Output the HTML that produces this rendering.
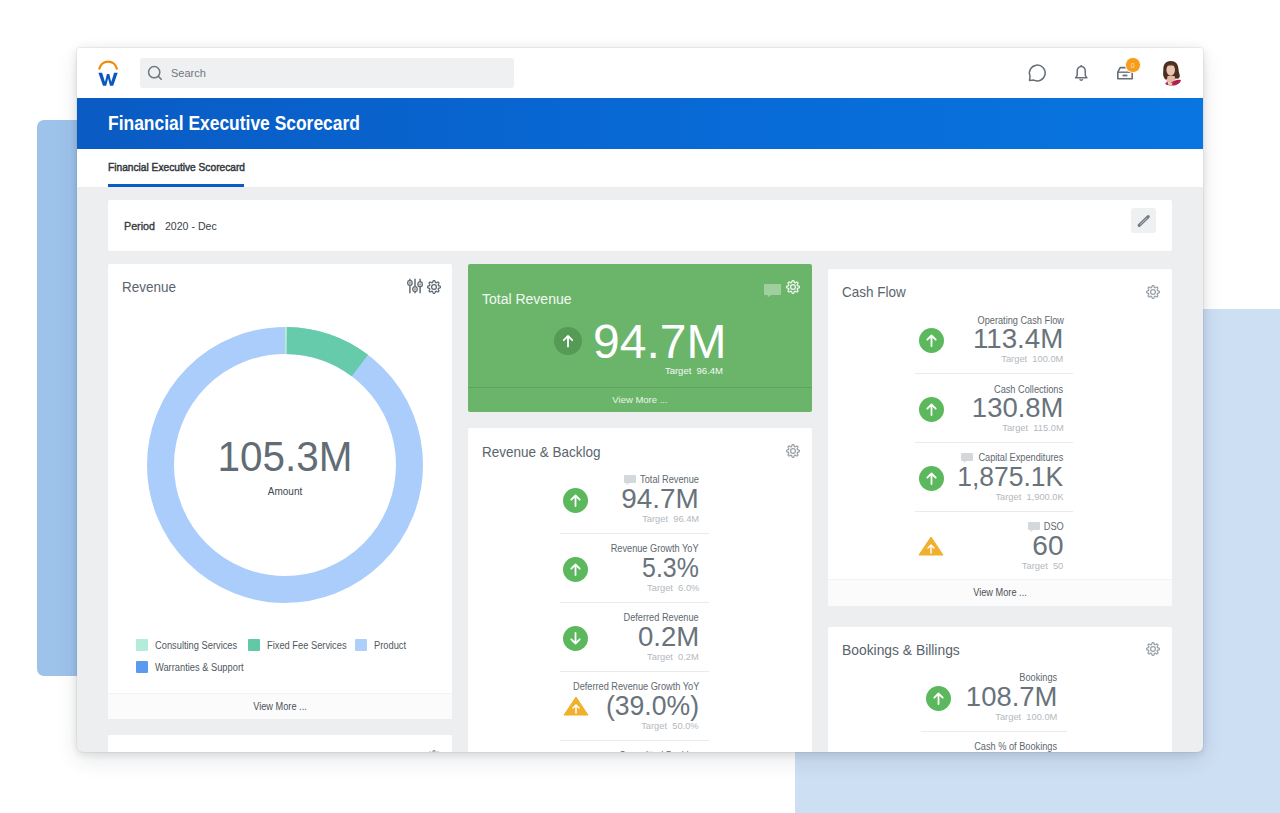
<!DOCTYPE html>
<html><head><meta charset="utf-8">
<style>
*{margin:0;padding:0;box-sizing:border-box}
html,body{width:1280px;height:813px;overflow:hidden;background:#fff;font-family:"Liberation Sans",sans-serif;position:relative}
.a{position:absolute}
.bgl{left:37px;top:120px;width:80px;height:556px;background:#9ec3eb;border-radius:7px}
.bgr{left:795px;top:309px;width:485px;height:504px;background:#cddff3}
.win{left:77px;top:48px;width:1126px;height:704px;background:#eceef0;border-radius:3px 3px 6px 6px;box-shadow:0 0 0 1px rgba(0,0,0,.045),0 3px 7px rgba(40,50,60,.07),0 8px 22px rgba(40,50,60,.11),0 0 12px rgba(0,0,0,.05);overflow:hidden}
.clip{left:0;top:0;width:1280px;height:752px;overflow:hidden}
.topbar{left:77px;top:48px;width:1126px;height:50px;background:#fff;border-radius:3px 3px 0 0}
.hdr{left:77px;top:98px;width:1126px;height:51px;background:linear-gradient(90deg,#0a5bc3 0%,#0867d3 45%,#0875e0 100%)}
.tabs{left:77px;top:149px;width:1126px;height:38px;background:#fff}
.card{background:#fff;border-radius:2px}
.t{white-space:nowrap;line-height:1}
.ttl{font-size:14.5px;color:#5a646d;transform:scaleX(.93);transform-origin:left}
.lbl{font-size:10px;color:#60686f;text-align:right;transform-origin:right}
.val{font-size:28px;color:#69737b;text-align:right;transform-origin:right}
.tgt{font-size:9.5px;color:#b3b9be;text-align:right;transform-origin:right}
.div{height:1px;background:#e9ebed}
.foot{background:#fbfbfb;border-top:1px solid #f3f3f4}
.vm{font-size:10px;color:#4b5157;transform:translateX(-50%) scaleX(.92)}
</style></head><body>
<div class="a bgl"></div><div class="a bgr"></div><div class="a win"></div><div class="a clip"><div class="a topbar"></div><div class="a hdr"></div><div class="a tabs"></div><svg class="a" style="left:94px;top:56px" width="28" height="34" viewBox="0 0 28 34">
<path d="M5.4 12.6 A8.9 8.9 0 0 1 22.8 12.6" fill="none" stroke="#f38a00" stroke-width="2.3" stroke-linecap="round"/>
<path d="M4.4 16.7 L8.1 16.7 L11 26 L12.9 18.1 L15.3 18.1 L17.2 26 L20.1 16.7 L23.7 16.7 L19.2 29.7 L16 29.7 L14.1 22.6 L12.2 29.7 L9 29.7 Z" fill="#0a57c0"/>
</svg><div class="a" style="left:140px;top:58px;width:374px;height:30px;background:#eff0f2;border-radius:3px"></div><svg class="a" style="left:146px;top:64px" width="18" height="18" viewBox="0 0 18 18">
<circle cx="8.2" cy="8.2" r="5.6" fill="none" stroke="#6f7780" stroke-width="1.5"/>
<path d="M12.3 12.3 L15.2 15.2" stroke="#6f7780" stroke-width="1.6" stroke-linecap="round"/></svg><div class="a t " style="left:171px;top:68px;font-size:11px;color:#6f7780">Search</div><svg class="a" style="left:1026px;top:62px" width="24" height="22" viewBox="0 0 24 22">
<path d="M4.1 14.2 L3.5 18.4 L7.9 18.1 A7.9 7.9 0 1 0 4.1 14.2 Z" fill="none" stroke="#666f78" stroke-width="1.5" stroke-linejoin="round"/></svg><svg class="a" style="left:1072px;top:63px" width="18" height="20" viewBox="0 0 18 20">
<path d="M9.25 3.6 C6.4 3.6 5.2 5.8 5.2 8.4 L5.2 12.4 L3.6 14.8 L14.9 14.8 L13.3 12.4 L13.3 8.4 C13.3 5.8 12.1 3.6 9.25 3.6 Z" fill="none" stroke="#666f78" stroke-width="1.5" stroke-linejoin="round"/>
<path d="M7.8 16.1 A1.5 1.5 0 0 0 10.7 16.1" fill="none" stroke="#666f78" stroke-width="1.5"/>
<circle cx="9.25" cy="3" r="1" fill="#666f78"/></svg><svg class="a" style="left:1114px;top:62px" width="22" height="20" viewBox="0 0 22 20">
<path d="M3.8 16.8 L3.8 10.2 L6.2 5.6 L15.8 5.6 L18.2 10.2 L18.2 16.8 Z" fill="none" stroke="#666f78" stroke-width="1.6" stroke-linejoin="round"/>
<path d="M3.8 10.2 L18.2 10.2" stroke="#666f78" stroke-width="1.4"/>
<path d="M8.6 13.5 L13.4 13.5" stroke="#666f78" stroke-width="1.8"/></svg><div class="a" style="left:1125px;top:57.4px;width:15.5px;height:15.5px;border-radius:50%;background:#f89c1c;border:1.2px solid #fff"></div><div class="a t " style="left:1130.8px;top:61.5px;font-size:7px;color:#fde2b8">0</div><svg class="a" style="left:1158px;top:56px" width="28" height="34" viewBox="0 0 28 34">
<path d="M12.5 5 C7.5 5 5.2 9 5.3 13.5 C5.3 17 4.6 19 6 21.5 C6.8 23 7.6 23.8 8.2 23.6 L20.6 22.6 C22 21.5 22.2 19.6 21.3 17.6 C20.6 15.5 20.6 12.5 19.9 10 C19 6.8 16.3 5 12.5 5 Z" fill="#4b2e20"/>
<path d="M9.6 20 L16.6 20 L18 26 L8.4 26 Z" fill="#e2bba6"/>
<ellipse cx="12.7" cy="13.9" rx="4.3" ry="5.9" fill="#e9c4b0"/>
<path d="M8.3 10.2 C9.2 8 11 7.5 13 7.5 C15.5 7.6 17 9 17.2 11 C16.3 9.6 14.5 9.3 12.5 9.4 C10.6 9.5 9.2 9.8 8.3 10.2 Z" fill="#5a3826"/>
<path d="M7.2 27.8 C7.8 26.6 8.6 26 9.6 25.8 L10.4 28.8 C9.2 29.2 8 28.9 7.2 27.8 Z" fill="#b5285a"/>
<path d="M9.8 28.9 C11 26.5 14 26 16.2 24.9 C18.2 24 21 23.3 23 24 C22.6 26.3 20.6 28.4 17.6 29.2 C14.6 29.8 11.8 29.6 9.8 28.9 Z" fill="#b2204f"/>
<path d="M10.2 25.5 C11.5 26.6 13.2 27 14.6 26.4 L13.8 29.4 C12.4 29.5 11.2 29.3 10.4 29 Z" fill="#e6c6b4"/>
</svg><div class="a t " style="left:108px;top:114px;font-size:19.5px;font-weight:bold;color:#fff;transform:scaleX(.894);transform-origin:left">Financial Executive Scorecard</div><div class="a t " style="left:108px;top:162px;font-size:10.5px;color:#33383d;-webkit-text-stroke:.45px #33383d;transform:scaleX(.97);transform-origin:left">Financial Executive Scorecard</div><div class="a" style="left:108px;top:184px;width:136px;height:3px;background:#0b5cc4"></div><div class="a card" style="left:108px;top:200px;width:1064px;height:51px"></div><div class="a t " style="left:124px;top:221px;font-size:10.5px;color:#363b40;-webkit-text-stroke:.35px #363b40;transform:scaleX(1.02);transform-origin:left">Period</div><div class="a t " style="left:165px;top:221px;font-size:11px;color:#3b4045;transform:scaleX(.96);transform-origin:left">2020 - Dec</div><div class="a" style="left:1131px;top:208px;width:25px;height:25px;background:#eef0f2;border-radius:3px"></div><svg class="a" style="left:1131px;top:208px" width="25" height="25" viewBox="0 0 25 25"><path d="M8.2 17.4 L17.2 8.6" stroke="#737b83" stroke-width="3.2" stroke-linecap="round"/><path d="M9.4 16.2 L15.6 10.2" stroke="#c9cdd1" stroke-width=".9" stroke-linecap="round"/></svg><div class="a card" style="left:108px;top:264px;width:344px;height:455px"></div><div class="a t ttl" style="left:122px;top:280px;">Revenue</div><svg class="a" style="left:407px;top:278px" width="16" height="16" viewBox="0 0 16 16"><g stroke="#5a626a" stroke-width="1.4" fill="none"><path d="M2.9 0.8 V2.6 M2.9 7.2 V15.2 M8 0.8 V9 M8 13.4 V15.2 M13.1 0.8 V4 M13.1 8.6 V15.2"/></g><g stroke="#5a626a" stroke-width="1.3" fill="#fff"><rect x="0.75" y="2.6" width="4.3" height="4.6" rx="1.6"/><rect x="5.85" y="8.8" width="4.3" height="4.6" rx="1.6"/><rect x="10.95" y="3.9" width="4.3" height="4.6" rx="1.6"/></g><g fill="#5a626a"><circle cx="2.9" cy="4.9" r=".8"/><circle cx="8" cy="11.1" r=".8"/><circle cx="13.1" cy="6.2" r=".8"/></g></svg><svg class="a" style="left:425.5px;top:278.5px" width="16" height="16" viewBox="0 0 16 16"><path d="M8.00 1.55 L8.25 1.57 L8.50 1.63 L8.74 1.78 L8.94 2.08 L9.08 2.56 L9.19 3.04 L9.31 3.35 L9.46 3.52 L9.61 3.63 L9.78 3.70 L9.95 3.77 L10.14 3.80 L10.36 3.78 L10.67 3.65 L11.08 3.39 L11.52 3.15 L11.88 3.08 L12.15 3.14 L12.37 3.27 L12.56 3.44 L12.73 3.63 L12.86 3.85 L12.92 4.12 L12.85 4.48 L12.61 4.92 L12.35 5.33 L12.22 5.64 L12.20 5.86 L12.23 6.05 L12.30 6.22 L12.37 6.39 L12.48 6.54 L12.65 6.69 L12.96 6.81 L13.44 6.92 L13.92 7.06 L14.22 7.26 L14.37 7.50 L14.43 7.75 L14.45 8.00 L14.43 8.25 L14.37 8.50 L14.22 8.74 L13.92 8.94 L13.44 9.08 L12.96 9.19 L12.65 9.31 L12.48 9.46 L12.37 9.61 L12.30 9.78 L12.23 9.95 L12.20 10.14 L12.22 10.36 L12.35 10.67 L12.61 11.08 L12.85 11.52 L12.92 11.88 L12.86 12.15 L12.73 12.37 L12.56 12.56 L12.37 12.73 L12.15 12.86 L11.88 12.92 L11.52 12.85 L11.08 12.61 L10.67 12.35 L10.36 12.22 L10.14 12.20 L9.95 12.23 L9.78 12.30 L9.61 12.37 L9.46 12.48 L9.31 12.65 L9.19 12.96 L9.08 13.44 L8.94 13.92 L8.74 14.22 L8.50 14.37 L8.25 14.43 L8.00 14.45 L7.75 14.43 L7.50 14.37 L7.26 14.22 L7.06 13.92 L6.92 13.44 L6.81 12.96 L6.69 12.65 L6.54 12.48 L6.39 12.37 L6.22 12.30 L6.05 12.23 L5.86 12.20 L5.64 12.22 L5.33 12.35 L4.92 12.61 L4.48 12.85 L4.12 12.92 L3.85 12.86 L3.63 12.73 L3.44 12.56 L3.27 12.37 L3.14 12.15 L3.08 11.88 L3.15 11.52 L3.39 11.08 L3.65 10.67 L3.78 10.36 L3.80 10.14 L3.77 9.95 L3.70 9.78 L3.63 9.61 L3.52 9.46 L3.35 9.31 L3.04 9.19 L2.56 9.08 L2.08 8.94 L1.78 8.74 L1.63 8.50 L1.57 8.25 L1.55 8.00 L1.57 7.75 L1.63 7.50 L1.78 7.26 L2.08 7.06 L2.56 6.92 L3.04 6.81 L3.35 6.69 L3.52 6.54 L3.63 6.39 L3.70 6.22 L3.77 6.05 L3.80 5.86 L3.78 5.64 L3.65 5.33 L3.39 4.92 L3.15 4.48 L3.08 4.12 L3.14 3.85 L3.27 3.63 L3.44 3.44 L3.63 3.27 L3.85 3.14 L4.12 3.08 L4.48 3.15 L4.92 3.39 L5.33 3.65 L5.64 3.78 L5.86 3.80 L6.05 3.77 L6.22 3.70 L6.39 3.63 L6.54 3.52 L6.69 3.35 L6.81 3.04 L6.92 2.56 L7.06 2.08 L7.26 1.78 L7.50 1.63 L7.75 1.57 Z" fill="none" stroke="#5f6870" stroke-width="1.25" stroke-linejoin="round"/><circle cx="8" cy="8" r="2.4" fill="none" stroke="#5f6870" stroke-width="1.25"/></svg><svg class="a" style="left:0;top:0" width="1280" height="813"><circle cx="285" cy="465" r="124.5" fill="none" stroke="#abcdfb" stroke-width="27"/><path d="M286.30 340.51 A124.5 124.5 0 0 1 359.93 365.57" fill="none" stroke="#66cbab" stroke-width="27"/><path d="M285.00 340.50 A124.5 124.5 0 0 1 286.74 340.51" fill="none" stroke="#b7ecd8" stroke-width="27"/></svg><div class="a t " style="left:285px;top:435px;font-size:43px;color:#626c75;transform:translateX(-50%) scaleX(.94)">105.3M</div><div class="a t " style="left:285px;top:487px;font-size:10px;color:#43494f;transform:translateX(-50%)">Amount</div><div class="a" style="left:136px;top:639px;width:12px;height:12px;background:#b4ecdb;border-radius:1px"></div><div class="a t " style="left:154.5px;top:640.5px;font-size:10px;color:#50575e;transform:scaleX(.93);transform-origin:left">Consulting Services</div><div class="a" style="left:248px;top:639px;width:12px;height:12px;background:#62c9a6;border-radius:1px"></div><div class="a t " style="left:266.5px;top:640.5px;font-size:10px;color:#50575e;transform:scaleX(.93);transform-origin:left">Fixed Fee Services</div><div class="a" style="left:355px;top:639px;width:12px;height:12px;background:#acd0fb;border-radius:1px"></div><div class="a t " style="left:373.5px;top:640.5px;font-size:10px;color:#50575e;transform:scaleX(.93);transform-origin:left">Product</div><div class="a" style="left:136px;top:661px;width:12px;height:12px;background:#5a9bf0;border-radius:1px"></div><div class="a t " style="left:154.5px;top:662.5px;font-size:10px;color:#50575e;transform:scaleX(.93);transform-origin:left">Warranties &amp; Support</div><div class="a foot" style="left:108px;top:693px;width:344px;height:26px"></div><div class="a t vm" style="left:280px;top:702px;">View More ...</div><div class="a card" style="left:108px;top:735px;width:344px;height:40px"></div><svg class="a" style="left:425.5px;top:749px" width="16" height="16" viewBox="0 0 16 16"><path d="M8.00 1.55 L8.25 1.57 L8.50 1.63 L8.74 1.78 L8.94 2.08 L9.08 2.56 L9.19 3.04 L9.31 3.35 L9.46 3.52 L9.61 3.63 L9.78 3.70 L9.95 3.77 L10.14 3.80 L10.36 3.78 L10.67 3.65 L11.08 3.39 L11.52 3.15 L11.88 3.08 L12.15 3.14 L12.37 3.27 L12.56 3.44 L12.73 3.63 L12.86 3.85 L12.92 4.12 L12.85 4.48 L12.61 4.92 L12.35 5.33 L12.22 5.64 L12.20 5.86 L12.23 6.05 L12.30 6.22 L12.37 6.39 L12.48 6.54 L12.65 6.69 L12.96 6.81 L13.44 6.92 L13.92 7.06 L14.22 7.26 L14.37 7.50 L14.43 7.75 L14.45 8.00 L14.43 8.25 L14.37 8.50 L14.22 8.74 L13.92 8.94 L13.44 9.08 L12.96 9.19 L12.65 9.31 L12.48 9.46 L12.37 9.61 L12.30 9.78 L12.23 9.95 L12.20 10.14 L12.22 10.36 L12.35 10.67 L12.61 11.08 L12.85 11.52 L12.92 11.88 L12.86 12.15 L12.73 12.37 L12.56 12.56 L12.37 12.73 L12.15 12.86 L11.88 12.92 L11.52 12.85 L11.08 12.61 L10.67 12.35 L10.36 12.22 L10.14 12.20 L9.95 12.23 L9.78 12.30 L9.61 12.37 L9.46 12.48 L9.31 12.65 L9.19 12.96 L9.08 13.44 L8.94 13.92 L8.74 14.22 L8.50 14.37 L8.25 14.43 L8.00 14.45 L7.75 14.43 L7.50 14.37 L7.26 14.22 L7.06 13.92 L6.92 13.44 L6.81 12.96 L6.69 12.65 L6.54 12.48 L6.39 12.37 L6.22 12.30 L6.05 12.23 L5.86 12.20 L5.64 12.22 L5.33 12.35 L4.92 12.61 L4.48 12.85 L4.12 12.92 L3.85 12.86 L3.63 12.73 L3.44 12.56 L3.27 12.37 L3.14 12.15 L3.08 11.88 L3.15 11.52 L3.39 11.08 L3.65 10.67 L3.78 10.36 L3.80 10.14 L3.77 9.95 L3.70 9.78 L3.63 9.61 L3.52 9.46 L3.35 9.31 L3.04 9.19 L2.56 9.08 L2.08 8.94 L1.78 8.74 L1.63 8.50 L1.57 8.25 L1.55 8.00 L1.57 7.75 L1.63 7.50 L1.78 7.26 L2.08 7.06 L2.56 6.92 L3.04 6.81 L3.35 6.69 L3.52 6.54 L3.63 6.39 L3.70 6.22 L3.77 6.05 L3.80 5.86 L3.78 5.64 L3.65 5.33 L3.39 4.92 L3.15 4.48 L3.08 4.12 L3.14 3.85 L3.27 3.63 L3.44 3.44 L3.63 3.27 L3.85 3.14 L4.12 3.08 L4.48 3.15 L4.92 3.39 L5.33 3.65 L5.64 3.78 L5.86 3.80 L6.05 3.77 L6.22 3.70 L6.39 3.63 L6.54 3.52 L6.69 3.35 L6.81 3.04 L6.92 2.56 L7.06 2.08 L7.26 1.78 L7.50 1.63 L7.75 1.57 Z" fill="none" stroke="#9aa1a8" stroke-width="1.25" stroke-linejoin="round"/><circle cx="8" cy="8" r="2.4" fill="none" stroke="#9aa1a8" stroke-width="1.25"/></svg><div class="a" style="left:468px;top:264px;width:344px;height:148px;background:#6bb56b;border-radius:2px"></div><div class="a t " style="left:482px;top:292px;font-size:14px;color:#f3f9f3">Total Revenue</div><svg class="a" style="left:764px;top:284px" width="17" height="14" viewBox="0 0 17 14"><path d="M1 0 H16 Q17 0 17 1 V10 Q17 11 16 11 L7.14 11 L3.74 13.2 L3.74 11 H1 Q0 11 0 10 V1 Q0 0 1 0 Z" fill="#9fcf9f"/></svg><svg class="a" style="left:785px;top:279px" width="16" height="16" viewBox="0 0 16 16"><path d="M8.00 1.55 L8.25 1.57 L8.50 1.63 L8.74 1.78 L8.94 2.08 L9.08 2.56 L9.19 3.04 L9.31 3.35 L9.46 3.52 L9.61 3.63 L9.78 3.70 L9.95 3.77 L10.14 3.80 L10.36 3.78 L10.67 3.65 L11.08 3.39 L11.52 3.15 L11.88 3.08 L12.15 3.14 L12.37 3.27 L12.56 3.44 L12.73 3.63 L12.86 3.85 L12.92 4.12 L12.85 4.48 L12.61 4.92 L12.35 5.33 L12.22 5.64 L12.20 5.86 L12.23 6.05 L12.30 6.22 L12.37 6.39 L12.48 6.54 L12.65 6.69 L12.96 6.81 L13.44 6.92 L13.92 7.06 L14.22 7.26 L14.37 7.50 L14.43 7.75 L14.45 8.00 L14.43 8.25 L14.37 8.50 L14.22 8.74 L13.92 8.94 L13.44 9.08 L12.96 9.19 L12.65 9.31 L12.48 9.46 L12.37 9.61 L12.30 9.78 L12.23 9.95 L12.20 10.14 L12.22 10.36 L12.35 10.67 L12.61 11.08 L12.85 11.52 L12.92 11.88 L12.86 12.15 L12.73 12.37 L12.56 12.56 L12.37 12.73 L12.15 12.86 L11.88 12.92 L11.52 12.85 L11.08 12.61 L10.67 12.35 L10.36 12.22 L10.14 12.20 L9.95 12.23 L9.78 12.30 L9.61 12.37 L9.46 12.48 L9.31 12.65 L9.19 12.96 L9.08 13.44 L8.94 13.92 L8.74 14.22 L8.50 14.37 L8.25 14.43 L8.00 14.45 L7.75 14.43 L7.50 14.37 L7.26 14.22 L7.06 13.92 L6.92 13.44 L6.81 12.96 L6.69 12.65 L6.54 12.48 L6.39 12.37 L6.22 12.30 L6.05 12.23 L5.86 12.20 L5.64 12.22 L5.33 12.35 L4.92 12.61 L4.48 12.85 L4.12 12.92 L3.85 12.86 L3.63 12.73 L3.44 12.56 L3.27 12.37 L3.14 12.15 L3.08 11.88 L3.15 11.52 L3.39 11.08 L3.65 10.67 L3.78 10.36 L3.80 10.14 L3.77 9.95 L3.70 9.78 L3.63 9.61 L3.52 9.46 L3.35 9.31 L3.04 9.19 L2.56 9.08 L2.08 8.94 L1.78 8.74 L1.63 8.50 L1.57 8.25 L1.55 8.00 L1.57 7.75 L1.63 7.50 L1.78 7.26 L2.08 7.06 L2.56 6.92 L3.04 6.81 L3.35 6.69 L3.52 6.54 L3.63 6.39 L3.70 6.22 L3.77 6.05 L3.80 5.86 L3.78 5.64 L3.65 5.33 L3.39 4.92 L3.15 4.48 L3.08 4.12 L3.14 3.85 L3.27 3.63 L3.44 3.44 L3.63 3.27 L3.85 3.14 L4.12 3.08 L4.48 3.15 L4.92 3.39 L5.33 3.65 L5.64 3.78 L5.86 3.80 L6.05 3.77 L6.22 3.70 L6.39 3.63 L6.54 3.52 L6.69 3.35 L6.81 3.04 L6.92 2.56 L7.06 2.08 L7.26 1.78 L7.50 1.63 L7.75 1.57 Z" fill="none" stroke="#f0f7f0" stroke-width="1.25" stroke-linejoin="round"/><circle cx="8" cy="8" r="2.4" fill="none" stroke="#f0f7f0" stroke-width="1.25"/></svg><svg class="a" style="left:554px;top:327px" width="28" height="28" viewBox="0 0 28 28"><circle cx="14" cy="14" r="14" fill="#559a55"/><path d="M14 19.5 L14 9 M9.8 13.2 L14 9 L18.2 13.2" fill="none" stroke="#fff" stroke-width="1.8" stroke-linecap="round" stroke-linejoin="round"/></svg><div class="a t " style="right:553.5px;top:317.5px;font-size:48px;color:#fff">94.7M</div><div class="a t " style="right:557px;top:366px;font-size:9.5px;color:#f3f9f3">Target &nbsp;96.4M</div><div class="a" style="left:468px;top:387px;width:344px;height:1px;background:#5fa35f"></div><div class="a t " style="left:640px;top:395px;font-size:9.5px;color:#eaf4ea;transform:translateX(-50%)">View More ...</div><div class="a card" style="left:468px;top:428px;width:344px;height:340px"></div><div class="a t ttl" style="left:482px;top:445px;">Revenue &amp; Backlog</div><svg class="a" style="left:785px;top:443px" width="16" height="16" viewBox="0 0 16 16"><path d="M8.00 1.55 L8.25 1.57 L8.50 1.63 L8.74 1.78 L8.94 2.08 L9.08 2.56 L9.19 3.04 L9.31 3.35 L9.46 3.52 L9.61 3.63 L9.78 3.70 L9.95 3.77 L10.14 3.80 L10.36 3.78 L10.67 3.65 L11.08 3.39 L11.52 3.15 L11.88 3.08 L12.15 3.14 L12.37 3.27 L12.56 3.44 L12.73 3.63 L12.86 3.85 L12.92 4.12 L12.85 4.48 L12.61 4.92 L12.35 5.33 L12.22 5.64 L12.20 5.86 L12.23 6.05 L12.30 6.22 L12.37 6.39 L12.48 6.54 L12.65 6.69 L12.96 6.81 L13.44 6.92 L13.92 7.06 L14.22 7.26 L14.37 7.50 L14.43 7.75 L14.45 8.00 L14.43 8.25 L14.37 8.50 L14.22 8.74 L13.92 8.94 L13.44 9.08 L12.96 9.19 L12.65 9.31 L12.48 9.46 L12.37 9.61 L12.30 9.78 L12.23 9.95 L12.20 10.14 L12.22 10.36 L12.35 10.67 L12.61 11.08 L12.85 11.52 L12.92 11.88 L12.86 12.15 L12.73 12.37 L12.56 12.56 L12.37 12.73 L12.15 12.86 L11.88 12.92 L11.52 12.85 L11.08 12.61 L10.67 12.35 L10.36 12.22 L10.14 12.20 L9.95 12.23 L9.78 12.30 L9.61 12.37 L9.46 12.48 L9.31 12.65 L9.19 12.96 L9.08 13.44 L8.94 13.92 L8.74 14.22 L8.50 14.37 L8.25 14.43 L8.00 14.45 L7.75 14.43 L7.50 14.37 L7.26 14.22 L7.06 13.92 L6.92 13.44 L6.81 12.96 L6.69 12.65 L6.54 12.48 L6.39 12.37 L6.22 12.30 L6.05 12.23 L5.86 12.20 L5.64 12.22 L5.33 12.35 L4.92 12.61 L4.48 12.85 L4.12 12.92 L3.85 12.86 L3.63 12.73 L3.44 12.56 L3.27 12.37 L3.14 12.15 L3.08 11.88 L3.15 11.52 L3.39 11.08 L3.65 10.67 L3.78 10.36 L3.80 10.14 L3.77 9.95 L3.70 9.78 L3.63 9.61 L3.52 9.46 L3.35 9.31 L3.04 9.19 L2.56 9.08 L2.08 8.94 L1.78 8.74 L1.63 8.50 L1.57 8.25 L1.55 8.00 L1.57 7.75 L1.63 7.50 L1.78 7.26 L2.08 7.06 L2.56 6.92 L3.04 6.81 L3.35 6.69 L3.52 6.54 L3.63 6.39 L3.70 6.22 L3.77 6.05 L3.80 5.86 L3.78 5.64 L3.65 5.33 L3.39 4.92 L3.15 4.48 L3.08 4.12 L3.14 3.85 L3.27 3.63 L3.44 3.44 L3.63 3.27 L3.85 3.14 L4.12 3.08 L4.48 3.15 L4.92 3.39 L5.33 3.65 L5.64 3.78 L5.86 3.80 L6.05 3.77 L6.22 3.70 L6.39 3.63 L6.54 3.52 L6.69 3.35 L6.81 3.04 L6.92 2.56 L7.06 2.08 L7.26 1.78 L7.50 1.63 L7.75 1.57 Z" fill="none" stroke="#9aa1a8" stroke-width="1.25" stroke-linejoin="round"/><circle cx="8" cy="8" r="2.4" fill="none" stroke="#9aa1a8" stroke-width="1.25"/></svg><div class="a t lbl" style="right:581px;top:475px;transform:scaleX(0.92)">Total Revenue</div><svg class="a" style="left:623.5px;top:474.5px" width="12" height="11" viewBox="0 0 12 11"><path d="M1 0 H11 Q12 0 12 1 V7 Q12 8 11 8 L5.04 8 L2.64 10.2 L2.64 8 H1 Q0 8 0 7 V1 Q0 0 1 0 Z" fill="#d5d8db"/></svg><div class="a t val" style="right:581px;top:484.5px;transform:scaleX(0.996)">94.7M</div><div class="a t tgt" style="right:581px;top:513.5px;transform:scaleX(.98)">Target &nbsp;96.4M</div><svg class="a" style="left:563.0px;top:487.5px" width="25.0" height="25.0" viewBox="0 0 25.0 25.0"><circle cx="12.5" cy="12.5" r="12.5" fill="#5cb85c"/><path d="M12.5 18.0 L12.5 7.5 M8.3 11.7 L12.5 7.5 L16.7 11.7" fill="none" stroke="#fff" stroke-width="1.8" stroke-linecap="round" stroke-linejoin="round"/></svg><div class="a div" style="left:560px;top:532.6px;width:149px"></div><div class="a t lbl" style="right:581px;top:544px;transform:scaleX(0.92)">Revenue Growth YoY</div><div class="a t val" style="right:581px;top:553.5px;transform:scaleX(0.89)">5.3%</div><div class="a t tgt" style="right:581px;top:582.5px;transform:scaleX(.98)">Target &nbsp;6.0%</div><svg class="a" style="left:563.0px;top:556.5px" width="25.0" height="25.0" viewBox="0 0 25.0 25.0"><circle cx="12.5" cy="12.5" r="12.5" fill="#5cb85c"/><path d="M12.5 18.0 L12.5 7.5 M8.3 11.7 L12.5 7.5 L16.7 11.7" fill="none" stroke="#fff" stroke-width="1.8" stroke-linecap="round" stroke-linejoin="round"/></svg><div class="a div" style="left:560px;top:601.6px;width:149px"></div><div class="a t lbl" style="right:581px;top:613px;transform:scaleX(0.92)">Deferred Revenue</div><div class="a t val" style="right:581px;top:622.5px;transform:scaleX(0.985)">0.2M</div><div class="a t tgt" style="right:581px;top:651.5px;transform:scaleX(.98)">Target &nbsp;0.2M</div><svg class="a" style="left:563.0px;top:625.5px" width="25.0" height="25.0" viewBox="0 0 25.0 25.0"><circle cx="12.5" cy="12.5" r="12.5" fill="#5cb85c"/><path d="M12.5 7.0 L12.5 17.5 M8.3 13.3 L12.5 17.5 L16.7 13.3" fill="none" stroke="#fff" stroke-width="1.8" stroke-linecap="round" stroke-linejoin="round"/></svg><div class="a div" style="left:560px;top:670.6px;width:149px"></div><div class="a t lbl" style="right:581px;top:682px;transform:scaleX(0.92)">Deferred Revenue Growth YoY</div><div class="a t val" style="right:581px;top:691.5px;transform:scaleX(0.95)">(39.0%)</div><div class="a t tgt" style="right:581px;top:720.5px;transform:scaleX(.98)">Target &nbsp;50.0%</div><svg class="a" style="left:562.5px;top:695px" width="26" height="22" viewBox="0 0 26 22"><path d="M13 2 L25 20 L1 20 Z" fill="#f0b02b" stroke="#f0b02b" stroke-width="1" stroke-linejoin="round"/><path d="M13 18 L13 10 M10 13 L13 10 L16 13" fill="none" stroke="#fff" stroke-width="1.5" stroke-linecap="round" stroke-linejoin="round"/></svg><div class="a div" style="left:560px;top:739.6px;width:149px"></div><div class="a t lbl" style="right:581px;top:751px;transform:scaleX(0.92)">Committed Backlog</div><div class="a card" style="left:828px;top:269px;width:344px;height:337px"></div><div class="a t ttl" style="left:842px;top:285px;">Cash Flow</div><svg class="a" style="left:1145px;top:283.5px" width="16" height="16" viewBox="0 0 16 16"><path d="M8.00 1.55 L8.25 1.57 L8.50 1.63 L8.74 1.78 L8.94 2.08 L9.08 2.56 L9.19 3.04 L9.31 3.35 L9.46 3.52 L9.61 3.63 L9.78 3.70 L9.95 3.77 L10.14 3.80 L10.36 3.78 L10.67 3.65 L11.08 3.39 L11.52 3.15 L11.88 3.08 L12.15 3.14 L12.37 3.27 L12.56 3.44 L12.73 3.63 L12.86 3.85 L12.92 4.12 L12.85 4.48 L12.61 4.92 L12.35 5.33 L12.22 5.64 L12.20 5.86 L12.23 6.05 L12.30 6.22 L12.37 6.39 L12.48 6.54 L12.65 6.69 L12.96 6.81 L13.44 6.92 L13.92 7.06 L14.22 7.26 L14.37 7.50 L14.43 7.75 L14.45 8.00 L14.43 8.25 L14.37 8.50 L14.22 8.74 L13.92 8.94 L13.44 9.08 L12.96 9.19 L12.65 9.31 L12.48 9.46 L12.37 9.61 L12.30 9.78 L12.23 9.95 L12.20 10.14 L12.22 10.36 L12.35 10.67 L12.61 11.08 L12.85 11.52 L12.92 11.88 L12.86 12.15 L12.73 12.37 L12.56 12.56 L12.37 12.73 L12.15 12.86 L11.88 12.92 L11.52 12.85 L11.08 12.61 L10.67 12.35 L10.36 12.22 L10.14 12.20 L9.95 12.23 L9.78 12.30 L9.61 12.37 L9.46 12.48 L9.31 12.65 L9.19 12.96 L9.08 13.44 L8.94 13.92 L8.74 14.22 L8.50 14.37 L8.25 14.43 L8.00 14.45 L7.75 14.43 L7.50 14.37 L7.26 14.22 L7.06 13.92 L6.92 13.44 L6.81 12.96 L6.69 12.65 L6.54 12.48 L6.39 12.37 L6.22 12.30 L6.05 12.23 L5.86 12.20 L5.64 12.22 L5.33 12.35 L4.92 12.61 L4.48 12.85 L4.12 12.92 L3.85 12.86 L3.63 12.73 L3.44 12.56 L3.27 12.37 L3.14 12.15 L3.08 11.88 L3.15 11.52 L3.39 11.08 L3.65 10.67 L3.78 10.36 L3.80 10.14 L3.77 9.95 L3.70 9.78 L3.63 9.61 L3.52 9.46 L3.35 9.31 L3.04 9.19 L2.56 9.08 L2.08 8.94 L1.78 8.74 L1.63 8.50 L1.57 8.25 L1.55 8.00 L1.57 7.75 L1.63 7.50 L1.78 7.26 L2.08 7.06 L2.56 6.92 L3.04 6.81 L3.35 6.69 L3.52 6.54 L3.63 6.39 L3.70 6.22 L3.77 6.05 L3.80 5.86 L3.78 5.64 L3.65 5.33 L3.39 4.92 L3.15 4.48 L3.08 4.12 L3.14 3.85 L3.27 3.63 L3.44 3.44 L3.63 3.27 L3.85 3.14 L4.12 3.08 L4.48 3.15 L4.92 3.39 L5.33 3.65 L5.64 3.78 L5.86 3.80 L6.05 3.77 L6.22 3.70 L6.39 3.63 L6.54 3.52 L6.69 3.35 L6.81 3.04 L6.92 2.56 L7.06 2.08 L7.26 1.78 L7.50 1.63 L7.75 1.57 Z" fill="none" stroke="#9aa1a8" stroke-width="1.25" stroke-linejoin="round"/><circle cx="8" cy="8" r="2.4" fill="none" stroke="#9aa1a8" stroke-width="1.25"/></svg><div class="a t lbl" style="right:216.5px;top:315.5px;transform:scaleX(0.92)">Operating Cash Flow</div><div class="a t val" style="right:216.5px;top:325.0px;transform:scaleX(0.99)">113.4M</div><div class="a t tgt" style="right:216.5px;top:354.0px;transform:scaleX(.98)">Target &nbsp;100.0M</div><svg class="a" style="left:918.5px;top:328.0px" width="25.0" height="25.0" viewBox="0 0 25.0 25.0"><circle cx="12.5" cy="12.5" r="12.5" fill="#5cb85c"/><path d="M12.5 18.0 L12.5 7.5 M8.3 11.7 L12.5 7.5 L16.7 11.7" fill="none" stroke="#fff" stroke-width="1.8" stroke-linecap="round" stroke-linejoin="round"/></svg><div class="a div" style="left:915px;top:373.1px;width:158px"></div><div class="a t lbl" style="right:216.5px;top:384.5px;transform:scaleX(0.92)">Cash Collections</div><div class="a t val" style="right:216.5px;top:394.0px;transform:scaleX(0.98)">130.8M</div><div class="a t tgt" style="right:216.5px;top:423.0px;transform:scaleX(.98)">Target &nbsp;115.0M</div><svg class="a" style="left:918.5px;top:397.0px" width="25.0" height="25.0" viewBox="0 0 25.0 25.0"><circle cx="12.5" cy="12.5" r="12.5" fill="#5cb85c"/><path d="M12.5 18.0 L12.5 7.5 M8.3 11.7 L12.5 7.5 L16.7 11.7" fill="none" stroke="#fff" stroke-width="1.8" stroke-linecap="round" stroke-linejoin="round"/></svg><div class="a div" style="left:915px;top:442.1px;width:158px"></div><div class="a t lbl" style="right:216.5px;top:453px;transform:scaleX(0.92)">Capital Expenditures</div><svg class="a" style="left:961px;top:452.5px" width="12" height="11" viewBox="0 0 12 11"><path d="M1 0 H11 Q12 0 12 1 V7 Q12 8 11 8 L5.04 8 L2.64 10.2 L2.64 8 H1 Q0 8 0 7 V1 Q0 0 1 0 Z" fill="#d5d8db"/></svg><div class="a t val" style="right:216.5px;top:462.5px;transform:scaleX(0.945)">1,875.1K</div><div class="a t tgt" style="right:216.5px;top:491.5px;transform:scaleX(.98)">Target &nbsp;1,900.0K</div><svg class="a" style="left:918.5px;top:465.5px" width="25.0" height="25.0" viewBox="0 0 25.0 25.0"><circle cx="12.5" cy="12.5" r="12.5" fill="#5cb85c"/><path d="M12.5 18.0 L12.5 7.5 M8.3 11.7 L12.5 7.5 L16.7 11.7" fill="none" stroke="#fff" stroke-width="1.8" stroke-linecap="round" stroke-linejoin="round"/></svg><div class="a div" style="left:915px;top:510.6px;width:158px"></div><div class="a t lbl" style="right:216.5px;top:522px;transform:scaleX(0.92)">DSO</div><svg class="a" style="left:1028px;top:521.5px" width="12" height="11" viewBox="0 0 12 11"><path d="M1 0 H11 Q12 0 12 1 V7 Q12 8 11 8 L5.04 8 L2.64 10.2 L2.64 8 H1 Q0 8 0 7 V1 Q0 0 1 0 Z" fill="#d5d8db"/></svg><div class="a t val" style="right:216.5px;top:531.5px;transform:scaleX(1.0)">60</div><div class="a t tgt" style="right:216.5px;top:560.5px;transform:scaleX(.98)">Target &nbsp;50</div><svg class="a" style="left:918px;top:535px" width="26" height="22" viewBox="0 0 26 22"><path d="M13 2 L25 20 L1 20 Z" fill="#f0b02b" stroke="#f0b02b" stroke-width="1" stroke-linejoin="round"/><path d="M13 18 L13 10 M10 13 L13 10 L16 13" fill="none" stroke="#fff" stroke-width="1.5" stroke-linecap="round" stroke-linejoin="round"/></svg><div class="a foot" style="left:828px;top:579px;width:344px;height:27px"></div><div class="a t vm" style="left:1000px;top:588px;">View More ...</div><div class="a card" style="left:828px;top:627px;width:344px;height:200px"></div><div class="a t ttl" style="left:842px;top:643px;transform:scaleX(.955)">Bookings &amp; Billings</div><svg class="a" style="left:1145px;top:641px" width="16" height="16" viewBox="0 0 16 16"><path d="M8.00 1.55 L8.25 1.57 L8.50 1.63 L8.74 1.78 L8.94 2.08 L9.08 2.56 L9.19 3.04 L9.31 3.35 L9.46 3.52 L9.61 3.63 L9.78 3.70 L9.95 3.77 L10.14 3.80 L10.36 3.78 L10.67 3.65 L11.08 3.39 L11.52 3.15 L11.88 3.08 L12.15 3.14 L12.37 3.27 L12.56 3.44 L12.73 3.63 L12.86 3.85 L12.92 4.12 L12.85 4.48 L12.61 4.92 L12.35 5.33 L12.22 5.64 L12.20 5.86 L12.23 6.05 L12.30 6.22 L12.37 6.39 L12.48 6.54 L12.65 6.69 L12.96 6.81 L13.44 6.92 L13.92 7.06 L14.22 7.26 L14.37 7.50 L14.43 7.75 L14.45 8.00 L14.43 8.25 L14.37 8.50 L14.22 8.74 L13.92 8.94 L13.44 9.08 L12.96 9.19 L12.65 9.31 L12.48 9.46 L12.37 9.61 L12.30 9.78 L12.23 9.95 L12.20 10.14 L12.22 10.36 L12.35 10.67 L12.61 11.08 L12.85 11.52 L12.92 11.88 L12.86 12.15 L12.73 12.37 L12.56 12.56 L12.37 12.73 L12.15 12.86 L11.88 12.92 L11.52 12.85 L11.08 12.61 L10.67 12.35 L10.36 12.22 L10.14 12.20 L9.95 12.23 L9.78 12.30 L9.61 12.37 L9.46 12.48 L9.31 12.65 L9.19 12.96 L9.08 13.44 L8.94 13.92 L8.74 14.22 L8.50 14.37 L8.25 14.43 L8.00 14.45 L7.75 14.43 L7.50 14.37 L7.26 14.22 L7.06 13.92 L6.92 13.44 L6.81 12.96 L6.69 12.65 L6.54 12.48 L6.39 12.37 L6.22 12.30 L6.05 12.23 L5.86 12.20 L5.64 12.22 L5.33 12.35 L4.92 12.61 L4.48 12.85 L4.12 12.92 L3.85 12.86 L3.63 12.73 L3.44 12.56 L3.27 12.37 L3.14 12.15 L3.08 11.88 L3.15 11.52 L3.39 11.08 L3.65 10.67 L3.78 10.36 L3.80 10.14 L3.77 9.95 L3.70 9.78 L3.63 9.61 L3.52 9.46 L3.35 9.31 L3.04 9.19 L2.56 9.08 L2.08 8.94 L1.78 8.74 L1.63 8.50 L1.57 8.25 L1.55 8.00 L1.57 7.75 L1.63 7.50 L1.78 7.26 L2.08 7.06 L2.56 6.92 L3.04 6.81 L3.35 6.69 L3.52 6.54 L3.63 6.39 L3.70 6.22 L3.77 6.05 L3.80 5.86 L3.78 5.64 L3.65 5.33 L3.39 4.92 L3.15 4.48 L3.08 4.12 L3.14 3.85 L3.27 3.63 L3.44 3.44 L3.63 3.27 L3.85 3.14 L4.12 3.08 L4.48 3.15 L4.92 3.39 L5.33 3.65 L5.64 3.78 L5.86 3.80 L6.05 3.77 L6.22 3.70 L6.39 3.63 L6.54 3.52 L6.69 3.35 L6.81 3.04 L6.92 2.56 L7.06 2.08 L7.26 1.78 L7.50 1.63 L7.75 1.57 Z" fill="none" stroke="#9aa1a8" stroke-width="1.25" stroke-linejoin="round"/><circle cx="8" cy="8" r="2.4" fill="none" stroke="#9aa1a8" stroke-width="1.25"/></svg><div class="a t lbl" style="right:223px;top:673px;transform:scaleX(0.92)">Bookings</div><div class="a t val" style="right:223px;top:682.5px;transform:scaleX(0.98)">108.7M</div><div class="a t tgt" style="right:223px;top:711.5px;transform:scaleX(.98)">Target &nbsp;100.0M</div><svg class="a" style="left:925.5px;top:685.5px" width="25.0" height="25.0" viewBox="0 0 25.0 25.0"><circle cx="12.5" cy="12.5" r="12.5" fill="#5cb85c"/><path d="M12.5 18.0 L12.5 7.5 M8.3 11.7 L12.5 7.5 L16.7 11.7" fill="none" stroke="#fff" stroke-width="1.8" stroke-linecap="round" stroke-linejoin="round"/></svg><div class="a div" style="left:921px;top:731px;width:146px"></div><div class="a t lbl" style="right:223px;top:742px;transform:scaleX(0.92)">Cash % of Bookings</div></div>
</body></html>
